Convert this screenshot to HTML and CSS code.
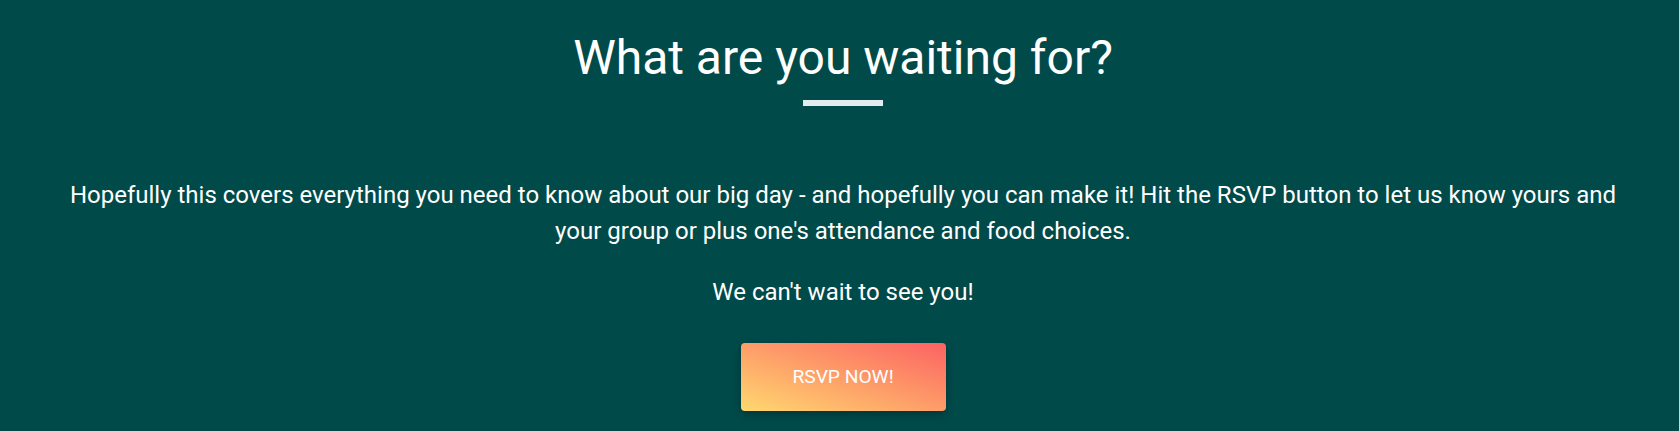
FILE: index.html
```html
<!DOCTYPE html>
<html lang="en">
<head>
<meta charset="utf-8">
<title>RSVP</title>
<link rel="stylesheet" href="styles.css">
</head>
<body>
<section class="cta">
  <h2 class="cta-title">What are you waiting for?</h2>
  <div class="cta-rule"></div>
  <p class="cta-text">Hopefully this covers everything you need to know about our big day - and hopefully you can make it! Hit the RSVP button to let us know yours and your group or plus one's attendance and food choices.</p>
  <p class="cta-text cta-text-last">We can't wait to see you!</p>
  <a class="cta-button" href="#">RSVP NOW!</a>
</section>
</body>
</html>
```

FILE: styles.css
```css
html, body {
  margin: 0;
  padding: 0;
  background: #004a4a;
}

body {
  font-family: Roboto, "Liberation Sans", Arial, sans-serif;
  color: #ffffff;
  height: 431px;
  overflow: hidden;
}

.cta {
  display: flex;
  flex-direction: column;
  align-items: center;
  text-align: center;
  padding: 30px 53px 0 60px;
  min-height: 431px;
  box-sizing: border-box;
}

.cta-title {
  margin: 0;
  font-size: 48px;
  line-height: 56px;
  font-weight: 400;
  color: #ffffff;
}

.cta-rule {
  width: 80px;
  height: 6px;
  margin-top: 14px;
  background: #e2ebee;
}

.cta-text {
  margin: 71px 0 0;
  font-size: 24px;
  line-height: 36px;
  font-weight: 400;
}

.cta-text-last {
  margin-top: 25px;
}

.cta-button {
  display: block;
  margin-top: 33px;
  width: 205px;
  box-sizing: border-box;
  padding: 20px 0;
  font-size: 19.2px;
  line-height: 28px;
  color: #ffffff;
  text-decoration: none;
  border-radius: 4px;
  background: linear-gradient(to top right, #ffd86f, #fc6262);
  box-shadow: 0 3px 8px rgba(0, 0, 0, 0.3);
}
```
